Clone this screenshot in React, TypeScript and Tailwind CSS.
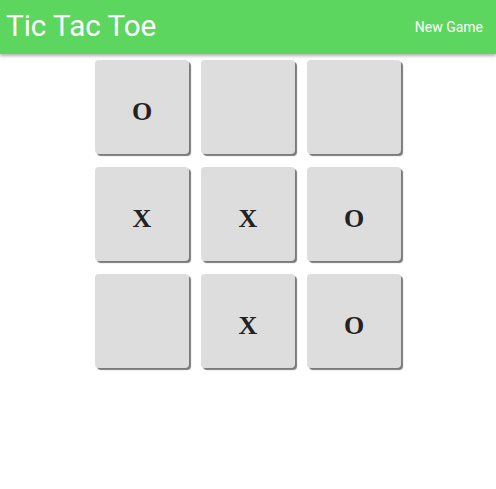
import React from "react";

const board = ["O", "", "", "X", "X", "O", "", "X", "O"];

const App = () => {
  return (
    <div className="min-h-screen bg-white font-['Roboto',sans-serif]">
      <header className="h-[54px] bg-[#5cd65f] flex items-center justify-between pl-[6px] pr-[13px] shadow-[0_2px_3px_rgba(0,0,0,0.3)] text-white">
        <h1 className="text-[29.6px] leading-none mt-[-1px]">Tic Tac Toe</h1>
        <button className="text-[14px] leading-none">New Game</button>
      </header>
      <div className="mx-auto mt-[6px] grid w-[306px] grid-cols-[94px_94px_94px] gap-x-[12px] gap-y-[13px]">
        {board.map((v, i) => (
          <button
            key={`cell${i}`}
            className="h-[94px] w-[94px] rounded-[4px] bg-[#dddddd] shadow-[2px_2px_1px_#7a7a7a] flex items-center justify-center pt-[9px] font-['Liberation_Serif',serif] font-bold text-[26px] text-[#222]"
          >
            {v}
          </button>
        ))}
      </div>
    </div>
  );
};

export default App;
